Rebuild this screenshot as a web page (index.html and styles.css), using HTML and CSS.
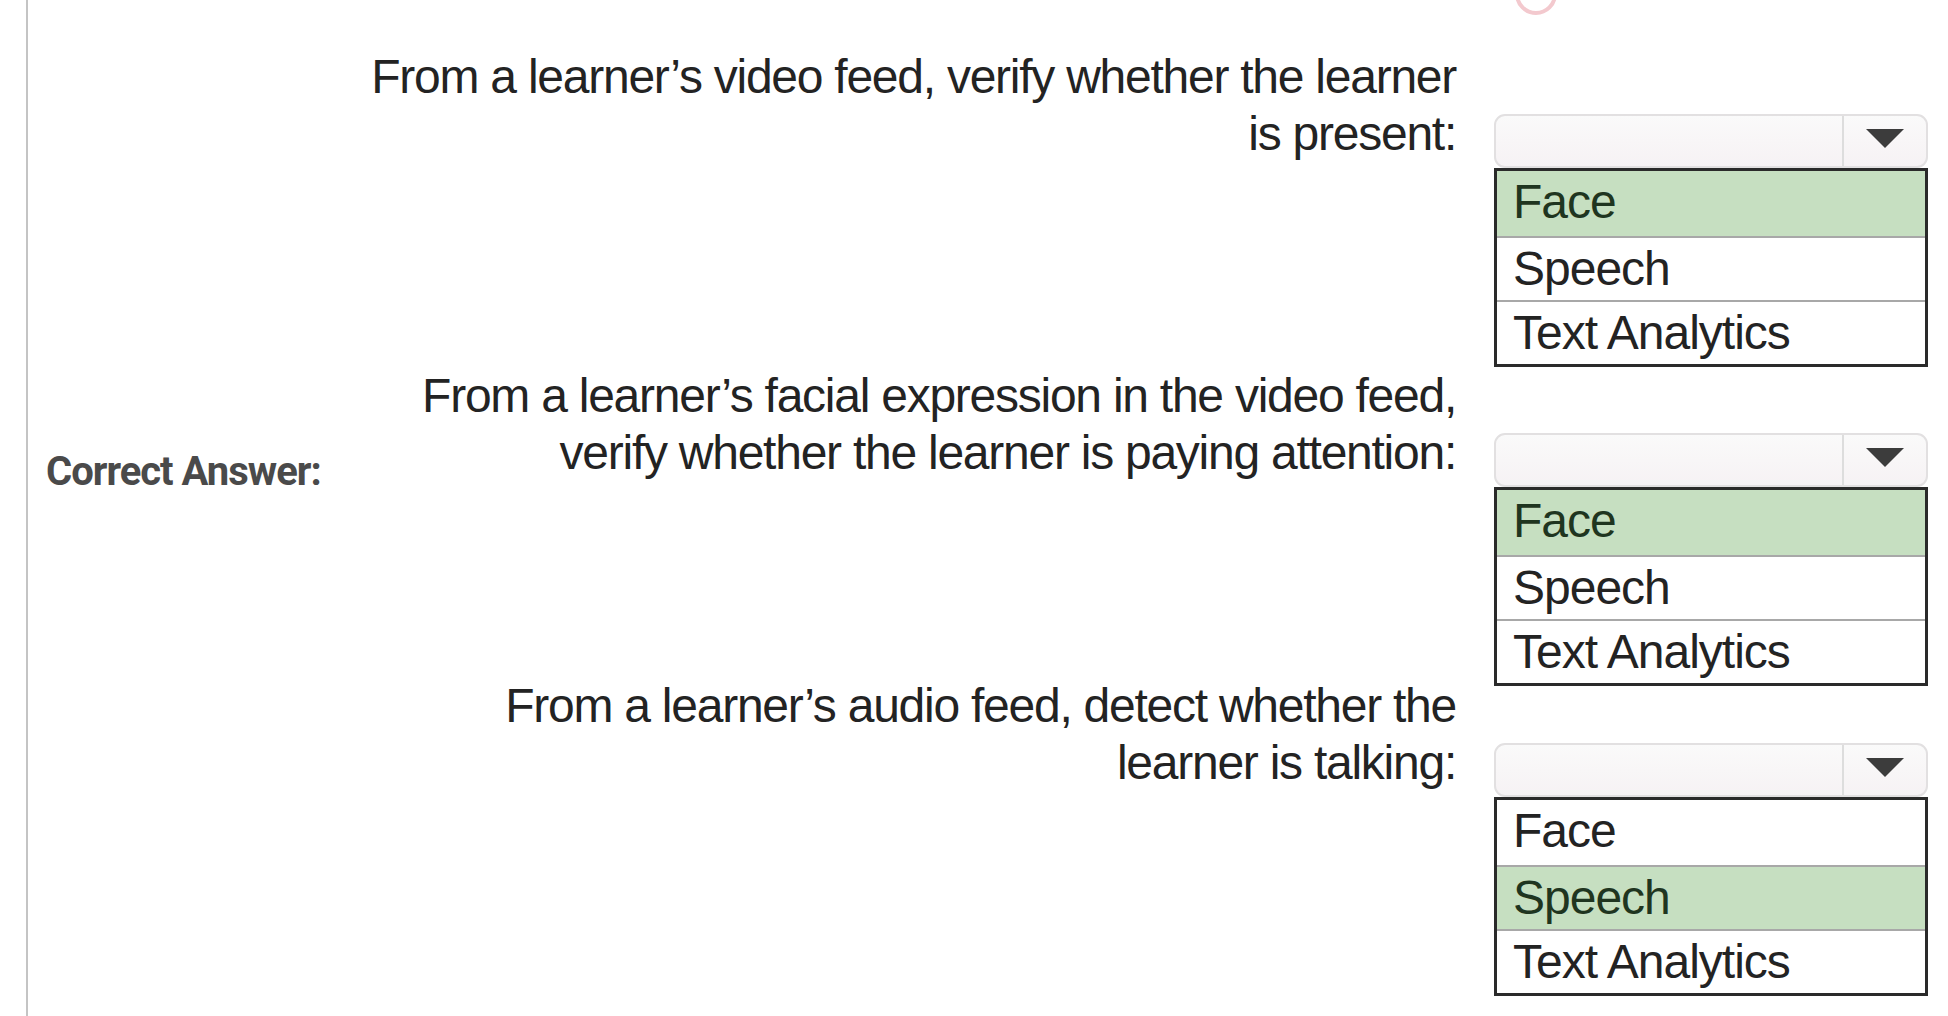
FILE: index.html
```html
<!DOCTYPE html>
<html lang="en">
<head>
<meta charset="utf-8">
<title>Correct Answer</title>
<link rel="stylesheet" href="styles.css">
</head>
<body>
<div class="frame">
  <span class="watermark" aria-hidden="true"></span>
  <div class="label-col">
    <div class="label">Correct Answer:</div>
  </div>
  <div class="questions">
    <div class="block">
      <div class="question">From a learner’s video feed, verify whether the learner<br>is present:</div>
      <div class="answer">
        <div class="select"><span class="select-value"></span><span class="select-arrow"><span class="tri"></span></span></div>
        <ul class="options">
          <li class="option selected">Face</li>
          <li class="option">Speech</li>
          <li class="option">Text Analytics</li>
        </ul>
      </div>
    </div>
    <div class="block">
      <div class="question">From a learner’s facial expression in the video feed,<br>verify whether the learner is paying attention:</div>
      <div class="answer">
        <div class="select"><span class="select-value"></span><span class="select-arrow"><span class="tri"></span></span></div>
        <ul class="options">
          <li class="option selected">Face</li>
          <li class="option">Speech</li>
          <li class="option">Text Analytics</li>
        </ul>
      </div>
    </div>
    <div class="block block-tight">
      <div class="question">From a learner’s audio feed, detect whether the<br>learner is talking:</div>
      <div class="answer">
        <div class="select"><span class="select-value"></span><span class="select-arrow"><span class="tri"></span></span></div>
        <ul class="options">
          <li class="option">Face</li>
          <li class="option selected">Speech</li>
          <li class="option">Text Analytics</li>
        </ul>
      </div>
    </div>
  </div>
</div>
</body>
</html>
```
FILE: styles.css
```css
html, body {
  margin: 0;
  padding: 0;
  background: #ffffff;
}
body {
  width: 1948px;
  height: 1016px;
  overflow: hidden;
  font-family: "Liberation Sans", Arial, sans-serif;
}
.frame {
  position: relative;
  margin-left: 26px;
  height: 1016px;
  border-left: 2px solid #c4c4c4;
  display: flex;
}
.watermark {
  position: absolute;
  left: 1487px;
  top: -27px;
  width: 34px;
  height: 34px;
  border: 4px solid #f3c9ce;
  border-radius: 50%;
}
.label-col {
  width: 300px;
  flex: none;
  padding-left: 18px;
  padding-top: 450px;
  box-sizing: border-box;
}
.label {
  font-family: Roboto, "Liberation Sans", sans-serif;
  font-weight: 700;
  font-size: 40px;
  line-height: 44px;
  letter-spacing: -1px;
  color: #4a4a4a;
  white-space: nowrap;
}
.questions {
  padding-top: 48px;
  display: flex;
  flex-direction: column;
}
.block {
  display: grid;
  grid-template-columns: 1128px 434px;
  column-gap: 38px;
}
.block-tight {
  margin-top: -9px;
}
.question {
  text-align: right;
  font-size: 48px;
  line-height: 57px;
  letter-spacing: -1.25px;
  color: #232323;
}
.answer {
  margin-top: 66px;
}
.select {
  height: 54px;
  box-sizing: border-box;
  border: 2px solid #e2e0e1;
  border-radius: 11px;
  background: linear-gradient(#fafafa, #f6f2f4);
  display: flex;
}
.select-value {
  flex: 1;
}
.select-arrow {
  width: 84px;
  border-left: 2px solid #dddddd;
  display: flex;
  align-items: center;
  justify-content: center;
  padding-bottom: 6px;
  box-sizing: border-box;
}
.tri {
  width: 0;
  height: 0;
  border-left: 19px solid transparent;
  border-right: 19px solid transparent;
  border-top: 19px solid #3c3c3c;
}
.options {
  list-style: none;
  margin: 0;
  padding: 0;
  border: 3px solid #2a2a2a;
}
.option {
  height: 64px;
  box-sizing: border-box;
  padding-left: 16px;
  font-size: 48px;
  line-height: 62px;
  letter-spacing: -1px;
  color: #232323;
  border-top: 2px solid #a8a8a8;
}
.option:first-child {
  border-top: none;
  height: 65px;
}
.option.selected {
  background: #c6dfc1;
  color: #1f3520;
}
```
